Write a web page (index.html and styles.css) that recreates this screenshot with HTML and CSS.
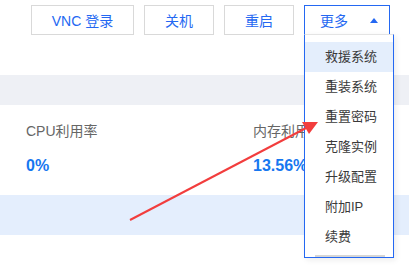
FILE: index.html
```html
<!DOCTYPE html>
<html>

<head>
  <meta charset="utf-8">
  <link rel="stylesheet" href="styles.css">
</head>

<body>
  <div id="toolbar">
    <button class="btn btnVnc">VNC 登录</button>
    <button class="btn">关机</button>
    <button class="btn">重启</button>
    <div id="moreWrap">
      <button class="btn btnMore">更多<span class="caret"></span></button>
      <ul id="moreMenu">
        <li class="active">救援系统</li>
        <li>重装系统</li>
        <li>重置密码</li>
        <li>克隆实例</li>
        <li>升级配置</li>
        <li>附加IP</li>
        <li>续费</li>
      </ul>
    </div>
  </div>
  <div class="band"></div>
  <div id="metrics">
    <div class="metric">
      <div class="label">CPU利用率</div>
      <div class="value">0%</div>
    </div>
    <div class="metric">
      <div class="label">内存利用率</div>
      <div class="value">13.56%</div>
    </div>
  </div>
  <div class="band blue"></div>
  <svg id="arrow" width="409" height="266" viewBox="0 0 409 266">
    <line x1="130" y1="220" x2="308" y2="127" stroke="#f23d3d" stroke-width="2" />
    <polygon points="318,122 302,122 309,134" fill="#f23d3d" />
  </svg>
</body>

</html>
```

FILE: styles.css
```css
html,
body {
  margin: 0;
  padding: 0;
  width: 409px;
  height: 266px;
  overflow: hidden;
  background: #fff;
  font-family: "Liberation Sans", "Noto Sans CJK SC", sans-serif;
}

body {
  position: relative;
}

#toolbar {
  height: 75px;
  display: flex;
  justify-content: flex-end;
  align-items: flex-start;
  gap: 10px;
  padding: 5px 19px 0 0;
  box-sizing: border-box;
}

.btn {
  height: 30px;
  width: 70px;
  border: 1px solid #d9d9d9;
  background: #fff;
  color: #2468f2;
  font: inherit;
  font-size: 14px;
  padding: 0;
  box-sizing: border-box;
}

.btnVnc {
  width: 103px;
}

#moreWrap {
  position: relative;
}

.btnMore {
  width: 86px;
  border-color: #2468f2;
  display: flex;
  align-items: center;
  padding-left: 15px;
}

.caret {
  width: 0;
  height: 0;
  border-left: 4px solid transparent;
  border-right: 4px solid transparent;
  border-bottom: 5px solid #2468f2;
  margin-left: 22px;
}

#moreMenu {
  position: absolute;
  left: 0;
  top: 29px;
  width: 90px;
  height: 224px;
  margin: 0;
  padding: 7px 0 0;
  list-style: none;
  background: #fff;
  border: 1px solid #2468f2;
  border-top: 1px solid #e4e4e4;
  box-sizing: border-box;
  box-shadow: 2px 2px 6px rgba(0, 0, 0, 0.08);
  z-index: 2;
}

#moreMenu::after {
  content: "";
  position: absolute;
  left: 10px;
  right: 8px;
  bottom: 0;
  height: 2px;
  background: #d6d6d6;
}

#moreMenu li {
  height: 30px;
  line-height: 30px;
  padding-left: 20px;
  font-size: 13px;
  color: #3a3a3a;
}

#moreMenu li.active {
  background: #e4eefc;
}

.band {
  height: 30px;
  background: #eef0f5;
}

.band.blue {
  height: 40px;
  background: #e4eefd;
}

#metrics {
  height: 90px;
  display: flex;
  padding-left: 26px;
  box-sizing: border-box;
}

.metric {
  flex: 1;
  min-width: 0;
  padding-top: 17px;
}

.metric:first-child {
  flex: 0 0 227px;
}

.label {
  font-size: 14px;
  color: #666;
  line-height: 18px;
  white-space: nowrap;
}

.value {
  margin-top: 15px;
  font-size: 16px;
  font-weight: bold;
  color: #1677f0;
  line-height: 22px;
}

#arrow {
  position: absolute;
  left: 0;
  top: 0;
  z-index: 3;
}
```
